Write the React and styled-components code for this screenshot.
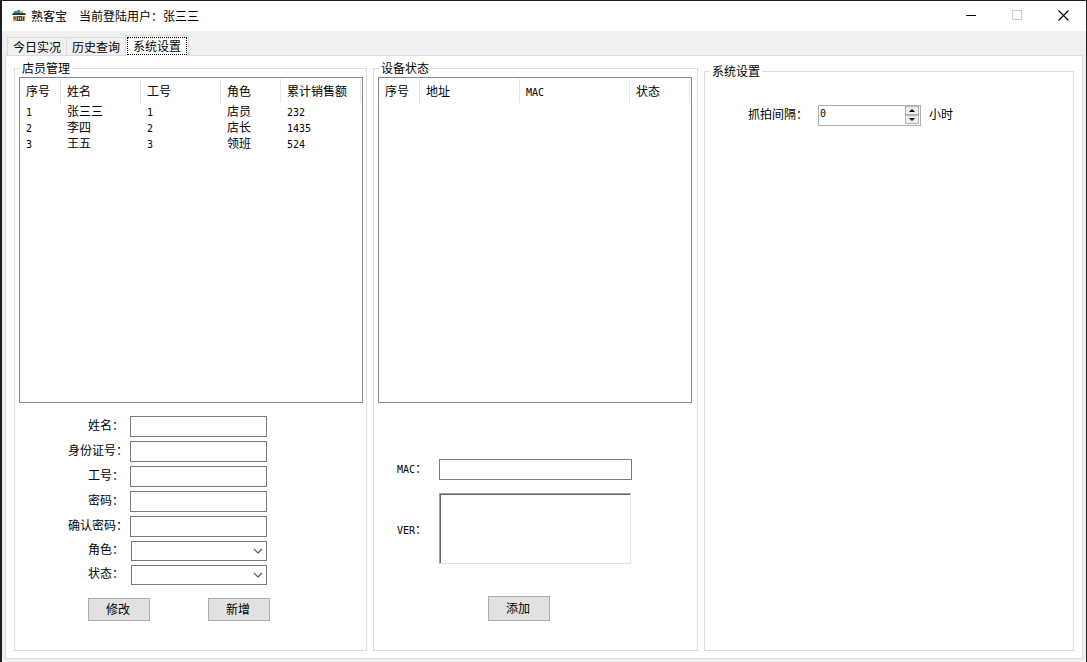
import React, { useState } from "react";
import styled, { createGlobalStyle, css } from "styled-components";

const Global = createGlobalStyle`
  * { box-sizing: border-box; }
  body {
    margin: 0;
    color: #000;
    background: #f0f0f0;
    font: 12px/16px "Noto Sans CJK SC", sans-serif;
  }
  button, input, select, textarea { font: inherit; color: inherit; margin: 0; }
`;

const Window = styled.div`
  min-height: 100vh;
  display: flex;
  flex-direction: column;
  background: #f0f0f0;
  border: solid #1e1c22;
  border-width: 1px 1px 0 2px;
`;

const TitleBar = styled.header`
  height: 30px;
  display: flex;
  align-items: center;
  padding-left: 10px;
  background: #fff;
`;

const Title = styled.h1`
  flex: 1;
  margin: 0 0 0 5px;
  font-size: 12px;
  font-weight: 400;
  display: flex;
  gap: 12px;
`;

const CaptionButton = styled.button`
  width: 46px;
  height: 30px;
  padding: 0 0 2px;
  border: 0;
  background: none;
  display: flex;
  align-items: center;
  justify-content: center;
`;

const Tabs = styled.nav`
  height: 21px;
  margin: 4px 0 -1px;
  padding-left: 5px;
  display: flex;
  align-items: flex-end;
  z-index: 1;
`;

const Tab = styled.button`
  height: 19px;
  width: 60px;
  padding: 0;
  border: 1px solid #dcdcdc;
  margin-right: -1px;
  background: #f0f0f0;
  white-space: nowrap;
  line-height: 16px;
  ${(p) => p.$active && css`
    height: 21px;
    width: 64px;
    padding: 1px 1px 2px;
    border-bottom: 0;
    background: #fff;
  `}
`;

const FocusRing = styled.span`
  display: block;
  height: 18px;
  border: 1px dotted #000;
  line-height: 15px;
`;

const Panel = styled.main`
  flex: 1;
  display: grid;
  grid-template-columns: 353px 325px minmax(300px, 1fr);
  column-gap: 6px;
  margin: 0 3px 3px;
  padding: 4px 8px 7px;
  background: #fff;
  border: 1px solid #dcdcdc;
`;

const Group = styled.fieldset`
  min-width: 0;
  margin: ${(p) => (p.$lowered ? "3px 0 0" : "0")};
  padding: 1px 4px 0;
  border: 1px solid #dcdcdc;
`;

const Legend = styled.legend`
  margin-left: 1px;
  padding: 0 2px;
`;

const ListBox = styled.div`
  width: ${(p) => p.$width}px;
  height: 326px;
  overflow: hidden;
  border: 1px solid #828790;
  padding-top: 1px;
`;

const Table = styled.table`
  table-layout: fixed;
  border-collapse: separate;
  border-spacing: 0;
  width: ${(p) => p.$width}px;
`;

const Th = styled.th`
  width: ${(p) => p.$width}px;
  height: 24px;
  padding: 0 0 1px 6px;
  border-right: 1px solid #e5e5e5;
  font-weight: 400;
  text-align: left;
  white-space: nowrap;
`;

const Td = styled.td`
  height: 16px;
  padding: 0 0 0 6px;
  white-space: nowrap;
`;

const Latin = styled.span`
  font: 10px/1 "DejaVu Sans Mono", monospace;
`;

const Form = styled.form`
  display: flex;
  flex-direction: column;
  gap: ${(p) => p.$gap}px;
  padding: ${(p) => p.$padding};
`;

const Row = styled.div`
  display: flex;
  align-items: center;
`;

const Label = styled.label`
  width: ${(p) => p.$width}px;
  padding-left: ${(p) => (p.$indent ? 20 : 0)}px;
  padding-bottom: ${(p) => (p.$centered ? 0 : 4)}px;
  white-space: nowrap;
`;

const TextInput = styled.input`
  width: ${(p) => p.$width}px;
  height: 21px;
  padding: 0 3px;
  border: 1px solid #7a7a7a;
  border-radius: 0;
  background: #fff;
`;

const TextArea = styled.textarea`
  display: block;
  width: 192px;
  height: 71px;
  padding: 2px;
  resize: none;
  border: 1px solid;
  border-color: #a0a0a0 #e3e3e3 #e3e3e3 #a0a0a0;
  border-radius: 0;
  box-shadow: inset 1px 1px #696969;
  background: #fff;
`;

const SelectWrap = styled.span`
  display: grid;
  align-items: center;
  width: 136px;
  margin-left: 1px;
  > * { grid-area: 1 / 1; }
  > svg { justify-self: end; margin-right: 4px; pointer-events: none; }
`;

const Select = styled.select`
  appearance: none;
  width: 100%;
  height: 20px;
  padding: 0 20px 0 3px;
  border: 1px solid #7a7a7a;
  border-radius: 0;
  background: #fff;
`;

const Actions = styled.div`
  display: flex;
  gap: 58px;
  padding: ${(p) => p.$padding};
`;

const PushButton = styled.button`
  width: 62px;
  height: ${(p) => (p.$tall ? 25 : 23)}px;
  padding: 0 2px 2px 0;
  border: 1px solid #adadad;
  background: #e1e1e1;
`;

const Spinner = styled.span`
  display: flex;
  width: 103px;
  height: 21px;
  margin-right: 8px;
  padding-right: 1px;
  border: 1px solid #abadb3;
`;

const SpinInput = styled.input`
  flex: 1;
  min-width: 0;
  padding: 0 0 3px 1px;
  border: 0;
  appearance: textfield;
  && { font: 10px/16px "DejaVu Sans Mono", monospace; }
  &::-webkit-inner-spin-button { display: none; }
`;

const SpinButtons = styled.span`
  display: flex;
  flex-direction: column;
  width: 14px;
  padding-bottom: 1px;
`;

const SpinButton = styled.button`
  flex: 1;
  display: flex;
  align-items: center;
  justify-content: center;
  padding: 0;
  border: 1px solid #b4b4b4;
  background: #ececec;
`;

const staff = [
  ["1", "张三三", "1", "店员", "232"],
  ["2", "李四", "2", "店长", "1435"],
  ["3", "王五", "3", "领班", "524"],
];

const staffColumns = [["序号", 41], ["姓名", 80], ["工号", 80], ["角色", 60], ["累计销售额", 80]];
const deviceColumns = [["序号", 41], ["地址", 100], ["MAC", 110], ["状态", 60]];

const isLatin = (s) => /^[\x20-\x7e]+$/.test(s);
const Text = ({ children }) => (isLatin(children) ? <Latin>{children}</Latin> : children);

function DataList({ columns, rows, label, width }) {
  const total = columns.reduce((sum, c) => sum + c[1], 0);
  return (
    <ListBox $width={width}>
      <Table $width={total} aria-label={label}>
        <thead>
          <tr>{columns.map(([name, w]) => <Th key={name} $width={w}><Text>{name}</Text></Th>)}</tr>
        </thead>
        <tbody>
          {rows.map((row) => (
            <tr key={row[0]}>{row.map((cell, i) => <Td key={i}><Text>{cell}</Text></Td>)}</tr>
          ))}
        </tbody>
      </Table>
    </ListBox>
  );
}

const Chevron = () => (
  <svg width="10" height="6" viewBox="0 0 10 6" fill="none" stroke="#555" strokeWidth="1.2">
    <path d="M1 1l4 4 4-4" />
  </svg>
);

const ShopIcon = () => (
  <svg width="14" height="14" viewBox="0 0 14 14" aria-hidden="true">
    <path d="M2 2h3v2H2z" fill="#2f8fc0" />
    <path d="M5 1h3v3H5z" fill="#35a08a" />
    <path d="M8 2h3v2H8z" fill="#e0b040" />
    <path d="M1 4h12l1 2H0z" fill="#173f4d" />
    <path d="M1 7h4v5H1z" fill="#d08a50" />
    <path d="M2 8h2v2H2z" fill="#8c4a2c" />
    <path d="M5 7h5v5H5z" fill="#24506a" />
    <path d="M6 8h1v3H6zM8 8h1v3H8z" fill="#9cc9e6" />
    <path d="M10 7h3v5h-3z" fill="#d08a50" />
    <path d="M11 8h1v4h-1z" fill="#3c3f4a" />
  </svg>
);

const staffFields = [
  ["name", "姓名：", "text"],
  ["idcard", "身份证号：", "text"],
  ["number", "工号：", "text"],
  ["password", "密码：", "password"],
  ["confirm", "确认密码：", "password"],
];

export default function App() {
  const [hours, setHours] = useState(0);
  return (
    <>
      <Global />
      <Window lang="zh-CN">
        <TitleBar>
          <ShopIcon />
          <Title><span>熟客宝</span><span>当前登陆用户：张三三</span></Title>
          <CaptionButton aria-label="最小化">
            <svg width="10" height="10" stroke="#000"><path d="M0 5.500h10" /></svg>
          </CaptionButton>
          <CaptionButton aria-label="最大化" disabled>
            <svg width="10" height="10" fill="none" stroke="#ccc"><path d="M.5.5h9v9h-9z" /></svg>
          </CaptionButton>
          <CaptionButton aria-label="关闭">
            <svg width="11" height="11" stroke="#000" strokeWidth="1.100"><path d="M.5.5l10 10M10.500.5l-10 10" /></svg>
          </CaptionButton>
        </TitleBar>
        <Tabs>
          <Tab type="button">今日实况</Tab>
          <Tab type="button">历史查询</Tab>
          <Tab type="button" $active><FocusRing>系统设置</FocusRing></Tab>
        </Tabs>
        <Panel>
          <Group>
            <Legend>店员管理</Legend>
            <DataList columns={staffColumns} rows={staff} label="店员管理" width={344} />
            <Form $gap={4} $padding="13px 0 0 49px">
              {staffFields.map(([id, text, type]) => (
                <Row key={id}>
                  <Label htmlFor={id} $width={62} $indent={text.length < 5}>{text}</Label>
                  <TextInput id={id} type={type} $width={137} />
                </Row>
              ))}
              {[["role", "角色："], ["state", "状态："]].map(([id, text]) => (
                <Row key={id}>
                  <Label htmlFor={id} $width={62} $indent>{text}</Label>
                  <SelectWrap>
                    <Select id={id}><option value="" /></Select>
                    <Chevron />
                  </SelectWrap>
                </Row>
              ))}
              <Actions $padding="9px 0 0 20px">
                <PushButton type="button">修改</PushButton>
                <PushButton type="button">新增</PushButton>
              </Actions>
            </Form>
          </Group>
          <Group>
            <Legend>设备状态</Legend>
            <DataList columns={deviceColumns} rows={[]} label="设备状态" width={314} />
            <Form $gap={13} $padding="56px 0 0 19px">
              <Row>
                <Label htmlFor="mac" $width={42}><Latin>MAC</Latin>：</Label>
                <TextInput id="mac" $width={193} />
              </Row>
              <Row>
                <Label htmlFor="ver" $width={42} $centered><Latin>VER</Latin>：</Label>
                <TextArea id="ver" />
              </Row>
              <Actions $padding="19px 0 0 91px">
                <PushButton type="button" $tall>添加</PushButton>
              </Actions>
            </Form>
          </Group>
          <Group $lowered>
            <Legend>系统设置</Legend>
            <Form $gap={0} $padding="25px 0 0 39px">
              <Row>
                <Label htmlFor="interval" $width={70}>抓拍间隔：</Label>
                <Spinner>
                  <SpinInput id="interval" type="number" min="0" value={hours}
                    onChange={(e) => setHours(Number(e.target.value))} />
                  <SpinButtons>
                    <SpinButton type="button" aria-label="增加" onClick={() => setHours(hours + 1)}>
                      <svg width="6" height="3"><path d="M0 3l3-3 3 3z" /></svg>
                    </SpinButton>
                    <SpinButton type="button" aria-label="减少" onClick={() => setHours(Math.max(0, hours - 1))}>
                      <svg width="6" height="3"><path d="M0 0l3 3 3-3z" /></svg>
                    </SpinButton>
                  </SpinButtons>
                </Spinner>
                <Label as="span" $width={24}>小时</Label>
              </Row>
            </Form>
          </Group>
        </Panel>
      </Window>
    </>
  );
}
